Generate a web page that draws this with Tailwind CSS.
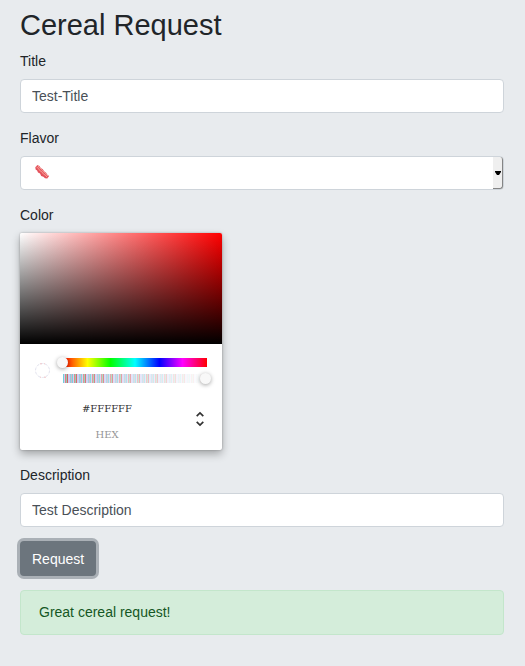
<!DOCTYPE html>
<html lang="en">
<head>
<meta charset="utf-8">
<meta name="viewport" content="width=device-width, initial-scale=1">
<title>Cereal Request</title>
<script src="https://cdn.jsdelivr.net/npm/@tailwindcss/browser@4"></script>
</head>
<body class="min-h-screen bg-[#e8ebee] font-['Liberation_Sans',Arial,sans-serif] text-[14px] leading-[22px] text-[#212529]">
<main class="px-5 pt-2 pr-[21px]">
  <h1 class="mb-[7px] text-[29px] leading-[35px]">Cereal Request</h1>
  <form>
    <div class="mb-[14px]">
      <label for="title" class="mb-[7px] block">Title</label>
      <input id="title" type="text" value="Test-Title" class="block h-[34px] w-full rounded-[4px] border border-[#ced4da] bg-white px-[11px] text-[#495057]">
    </div>

    <div class="mb-[14px]">
      <label for="flavor" class="mb-[7px] block">Flavor</label>
      <div class="relative">
        <select id="flavor" class="block h-[34px] w-full appearance-none rounded-[4px] border border-[#ced4da] bg-white px-[11px] text-transparent">
          <option>🥓</option>
        </select>
        <svg class="pointer-events-none absolute top-2 left-[14px] size-4" viewBox="0 0 16 16" aria-hidden="true">
          <path d="M1.3 3.2L3.4 1l2 .9 1.4 2 2 1.3 1.3 2 2 1.5 1.3 2 1.7 1.4-1.8 2.5-2.3-.3-1.6-1.5-2.2-.9-1.2-2.3-2-1-.9-2.2-1.5-1z" fill="#e4525c"/>
          <path d="M2.5 3l2 1.5 1.2 2 2.2 1.4 1.4 2 2 1.3 1.8 2M4 1.8l1.5 2 2 1.5 1.5 2.1 2 1.2 1.3 2 1.8 1.3" fill="none" stroke="#f9b4a6" stroke-width=".8"/>
        </svg>
        <span class="pointer-events-none absolute inset-y-px right-px flex w-[10px] items-center justify-center rounded-r-[3px] border-r border-b border-[#858585] bg-[#efefef]" aria-hidden="true">
          <svg class="h-[4px] w-[6px]" viewBox="0 0 6 4"><path d="M0 0h6v1L4 4H2L0 1z" fill="#000"/></svg>
        </span>
      </div>
    </div>

    <fieldset class="mb-[14px]">
      <legend class="mb-[7px] block">Color</legend>
      <div class="w-[202px] rounded-[2px] bg-white shadow-[0_0_2px_rgba(0,0,0,0.3),0_4px_8px_rgba(0,0,0,0.3)]">
        <div class="h-[111px] rounded-t-[2px] bg-[linear-gradient(to_top,#000,transparent),linear-gradient(to_right,#fff,#f00)]"></div>
        <div class="px-[15px] pt-[14px] pb-[4px]">
          <div class="flex items-center">
            <svg class="mr-[13px] size-[15px]" viewBox="0 0 15 15" aria-hidden="true"><circle cx="7.5" cy="7.5" r="7" fill="none" stroke="#e3e3ee" stroke-dasharray="3 1.4"/><path d="M5 .8h2M9 .8h1M5 14.2h1M9 14.2h2" stroke="#efc5c8"/></svg>
            <div class="flex flex-1 flex-col gap-[7px]">
              <input type="range" aria-label="Hue" min="0" max="360" value="0" class="h-[9px] w-full appearance-none bg-[linear-gradient(to_right,#f00_0%,#ff0_17%,#0f0_33%,#0ff_50%,#00f_67%,#f0f_83%,#f00_100%)] [&::-webkit-slider-thumb]:size-[11px] [&::-webkit-slider-thumb]:-translate-x-[6px] [&::-webkit-slider-thumb]:appearance-none [&::-webkit-slider-thumb]:rounded-full [&::-webkit-slider-thumb]:bg-[#f8f8f8] [&::-webkit-slider-thumb]:shadow-[0_1px_4px_rgba(0,0,0,0.37)]">
              <input type="range" aria-label="Opacity" min="0" max="100" value="100" class="h-[9px] w-full appearance-none bg-[linear-gradient(to_right,transparent,#fff),repeating-linear-gradient(to_right,#75ccd9_0px,#75ccd9_1px,#c9d2f2_1px,#c9d2f2_2px,#dd7e85_2px,#dd7e85_3px,#8ad0aa_3px,#8ad0aa_4px,#d05f65_4px,#d05f65_5px,#c9c9f4_5px,#c9c9f4_7px,#8ecad9_7px,#8ecad9_8px,#ceb1c6_8px,#ceb1c6_9px)] [&::-webkit-slider-thumb]:size-[11px] [&::-webkit-slider-thumb]:translate-x-[4px] [&::-webkit-slider-thumb]:appearance-none [&::-webkit-slider-thumb]:rounded-full [&::-webkit-slider-thumb]:bg-[#f8f8f8] [&::-webkit-slider-thumb]:shadow-[0_1px_4px_rgba(0,0,0,0.37)]">
            </div>
          </div>
          <div class="mt-[15px] flex items-start font-['DejaVu_Serif',serif]">
            <div class="mr-[14px] flex flex-1 flex-col items-center">
              <input id="hex" type="text" value="#FFFFFF" class="h-[22px] w-full bg-transparent text-center text-[10px] text-[#333]">
              <label for="hex" class="mt-[4px] text-[10px] leading-[22px] text-[#969696]">HEX</label>
            </div>
            <button type="button" aria-label="Change color format" class="mt-[11px] h-[20px] w-[14px]">
              <svg class="mx-auto h-[16px] w-[10px]" viewBox="0 0 10 16" fill="none" stroke="#333" stroke-width="1.7" aria-hidden="true"><path d="M1.7 5.2L5 2l3.3 3.2M1.7 10.8L5 14l3.3-3.2"/></svg>
            </button>
          </div>
        </div>
      </div>
    </fieldset>

    <div class="mb-[14px]">
      <label for="description" class="mb-[7px] block">Description</label>
      <input id="description" type="text" value="Test Description" class="block h-[34px] w-full rounded-[4px] border border-[#ced4da] bg-white px-[11px] text-[#495057]">
    </div>

    <button type="button" class="mb-[14px] block h-[35px] rounded-[4px] bg-[#6c757d] px-3 text-white shadow-[0_0_0_3px_rgba(108,117,125,0.5)]">Request</button>
  </form>
  <div role="status" class="rounded-[4px] border border-[#c3e6cb] bg-[#d4edda] px-[18px] py-[11px] leading-[21px] text-[#155724]">Great cereal request!</div>
</main>
</body>
</html>
